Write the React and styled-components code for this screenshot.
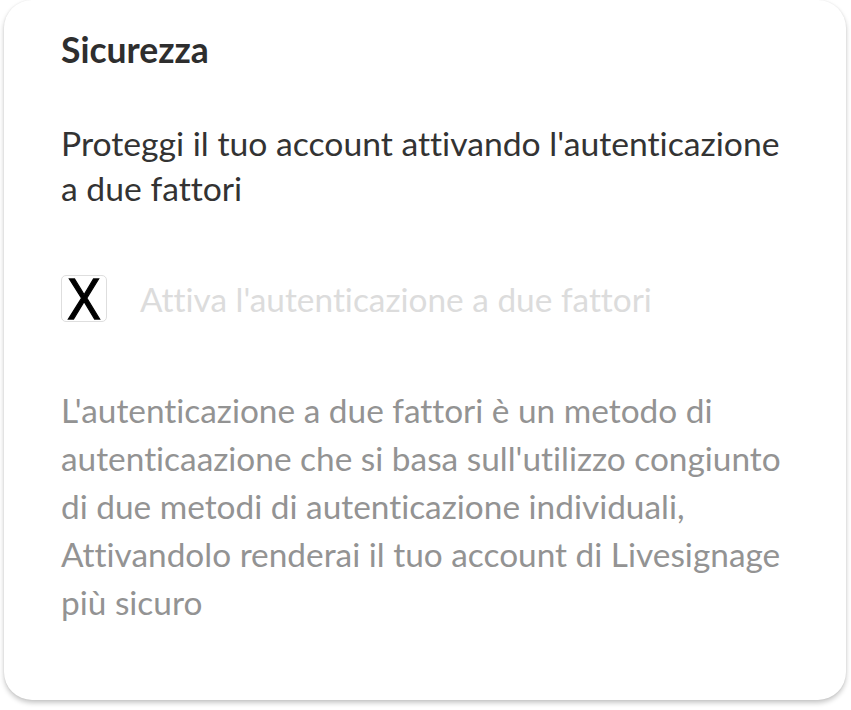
import styled, { createGlobalStyle } from "styled-components";

const GlobalStyle = createGlobalStyle`
  html, body {
    margin: 0;
    padding: 0;
    background: #ffffff;
  }
  body {
    font-family: "Lato", "Noto Sans", sans-serif;
    font-variant-ligatures: none;
  }
`;

export default function App() {
  return (
    <Page>
      <GlobalStyle />
      <Card>
        <Title>Sicurezza</Title>
        <Intro>
          Proteggi il tuo account attivando l'autenticazione
          <br />a due fattori
        </Intro>
        <CheckRow>
          <CheckBox>
            <Mark>X</Mark>
          </CheckBox>
          <CheckLabel>Attiva l'autenticazione a due fattori</CheckLabel>
        </CheckRow>
        <Description>
          L'autenticazione a due fattori è un metodo di
          <br />
          autenticaazione che si basa sull'utilizzo congiunto
          <br />
          di due metodi di autenticazione individuali,
          <br />
          Attivandolo renderai il tuo account di Livesignage
          <br />
          più sicuro
        </Description>
      </Card>
    </Page>
  );
}

const Page = styled.div`
  width: 851px;
  height: 710px;
  padding: 0 5px 0 4px;
  box-sizing: border-box;
`;

const Card = styled.div`
  height: 700px;
  box-sizing: border-box;
  background: #ffffff;
  border-radius: 28px;
  box-shadow: 0 3px 5px rgba(0, 0, 0, 0.22), 0 0 2px rgba(0, 0, 0, 0.08);
  padding: 28px 40px 0 57px;
  display: flex;
  flex-direction: column;
`;

const Title = styled.h2`
  margin: 0;
  font-size: 35.5px;
  font-weight: 700;
  line-height: 44px;
  color: #2e2e2e;
`;

const Intro = styled.p`
  margin: 49px 0 0;
  font-size: 33.7px;
  line-height: 45px;
  color: #333333;
`;

const CheckRow = styled.div`
  display: flex;
  align-items: center;
  gap: 33px;
  margin-top: 64px;
`;

const CheckBox = styled.span`
  width: 44px;
  height: 45px;
  border: 1px solid #dedede;
  border-radius: 5px;
  display: flex;
  justify-content: center;
`;

const Mark = styled.span`
  display: block;
  font-family: "Liberation Sans", sans-serif;
  font-size: 57px;
  line-height: 47px;
  color: #000000;
  -webkit-text-stroke: 1.3px #000000;
  transform: scaleX(0.88);
`;

const CheckLabel = styled.span`
  font-size: 33.4px;
  color: #dcdcdc;
`;

const Description = styled.p`
  margin: 64px 0 0;
  font-size: 33.4px;
  line-height: 48px;
  color: #939393;
`;
